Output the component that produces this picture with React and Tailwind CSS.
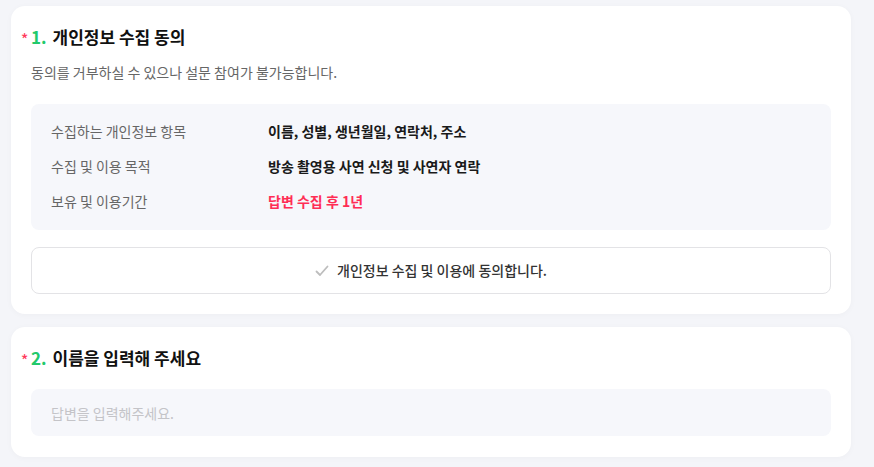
export default function App() {
  const rows = [
    { label: "수집하는 개인정보 항목", value: "이름, 성별, 생년월일, 연락처, 주소", red: false },
    { label: "수집 및 이용 목적", value: "방송 촬영용 사연 신청 및 사연자 연락", red: false },
    { label: "보유 및 이용기간", value: "답변 수집 후 1년", red: true },
  ];

  return (
    <div
      className="min-h-screen bg-[#f4f5f9] pt-[6px] pl-[11px]"
      style={{ fontFamily: '"Noto Sans CJK KR", "Noto Sans", sans-serif' }}
    >
      <div className="w-[840px] flex flex-col gap-[13px]">
        {/* Question 1 */}
        <section className="bg-white rounded-[14px] shadow-[0_1px_6px_rgba(0,0,0,0.03)] px-[20px] pt-[19px] pb-[20px]">
          <h2 className="relative flex items-center h-[24px] text-[17px] font-bold text-[#111]">
            <span className="absolute -left-[10px] top-[4px] text-[15px] leading-[20px] text-[#ff3b5c] font-medium">*</span>
            <span className="text-[#22c96b] mr-[6px]">1.</span>
            개인정보 수집 동의
          </h2>
          <p className="mt-[13px] h-[20px] leading-[20px] text-[14px] text-[#666]">
            동의를 거부하실 수 있으나 설문 참여가 불가능합니다.
          </p>

          <div className="mt-[22px] bg-[#f6f7fb] rounded-[8px] px-[20px] pt-[10px] pb-[11px]">
            {rows.map((r) => (
              <div key={r.label} className="flex items-center h-[35px] text-[14px]">
                <span className="w-[217px] text-[#666]">{r.label}</span>
                <span className={r.red ? "font-bold text-[#ff2d55]" : "font-bold text-[#1a1a1a]"}>
                  {r.value}
                </span>
              </div>
            ))}
          </div>

          <button className="mt-[17px] w-full h-[47px] rounded-[8px] border border-[#e3e3e6] bg-white flex items-center justify-center gap-[8px] text-[14px] font-medium text-[#333]">
            <svg width="14" height="12" viewBox="0 0 14 12" fill="none">
              <path d="M1.5 6.5L5 10L12.5 1.5" stroke="#bdbdbd" strokeWidth="1.8" strokeLinecap="round" strokeLinejoin="round" />
            </svg>
            개인정보 수집 및 이용에 동의합니다.
          </button>
        </section>

        {/* Question 2 */}
        <section className="bg-white rounded-[14px] shadow-[0_1px_6px_rgba(0,0,0,0.03)] px-[20px] pt-[19px] pb-[21px]">
          <h2 className="relative flex items-center h-[24px] text-[17px] font-bold text-[#111]">
            <span className="absolute -left-[10px] top-[4px] text-[15px] leading-[20px] text-[#ff3b5c] font-medium">*</span>
            <span className="text-[#22c96b] mr-[6px]">2.</span>
            이름을 입력해 주세요
          </h2>
          <input
            className="mt-[19px] w-full h-[47px] rounded-[8px] bg-[#f6f7fb] px-[20px] text-[14px] outline-none placeholder:text-[#c4c4c8]"
            placeholder="답변을 입력해주세요."
          />
        </section>
      </div>
    </div>
  );
}
